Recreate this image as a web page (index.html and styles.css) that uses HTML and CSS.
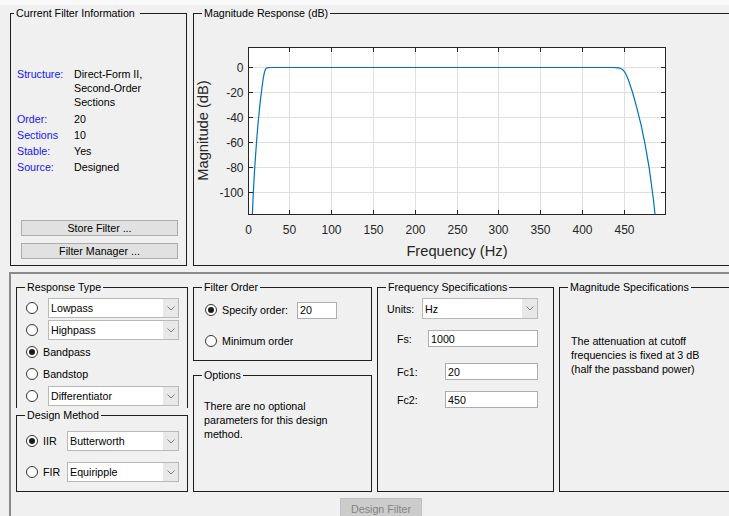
FILE: index.html
```html
<!DOCTYPE html>
<html lang="en">
<head>
<meta charset="utf-8">
<title>Filter Designer</title>
<link rel="stylesheet" href="styles.css">
</head>
<body>
<div class="strip"></div>

<div class="top-row">
  <fieldset class="panel info-panel">
    <legend class="legend-tight">Current Filter Information&nbsp;</legend>
    <div class="info-body">
      <dl class="info-grid">
        <dt>Structure:</dt><dd class="multi">Direct-Form II,<br>Second-Order<br>Sections</dd>
        <dt>Order:</dt><dd>20</dd>
        <dt>Sections</dt><dd>10</dd>
        <dt>Stable:</dt><dd>Yes</dd>
        <dt>Source:</dt><dd>Designed</dd>
      </dl>
      <div class="info-buttons">
        <button class="btn btn-wide" type="button">Store Filter ...</button>
        <button class="btn btn-wide" type="button">Filter Manager ...</button>
      </div>
    </div>
  </fieldset>

  <fieldset class="panel plot-panel">
    <legend>Magnitude Response (dB)</legend>
    <svg class="plot" width="535" height="245" viewBox="194 20 535 245" xmlns="http://www.w3.org/2000/svg">
      <rect class="axes-bg" x="248" y="47" width="418" height="167"/>
      <g class="grid-line">
        <path d="M289.5 47.5V214.5M331.5 47.5V214.5M373.5 47.5V214.5M415.5 47.5V214.5M457.5 47.5V214.5M498.5 47.5V214.5M540.5 47.5V214.5M582.5 47.5V214.5M624.5 47.5V214.5"/>
        <path d="M248.5 67.5H665.5M248.5 92.5H665.5M248.5 117.5H665.5M248.5 142.5H665.5M248.5 167.5H665.5M248.5 192.5H665.5"/>
      </g>
      <path class="curve" d="M252.4,214 L253.0,199.4 L253.85,182.6 L254.7,168.0 L256.4,143.7 L258.0,123.8 L258.9,115.0 L259.7,106.9 L260.5,99.3 L261.4,92.2 L262.2,85.7 L263.0,79.8 L263.9,74.8 L264.7,71.3 L265.6,69.2 L266.4,68.2 L268.1,67.6 L271.4,67.5 L611.7,67.5 L615.8,67.6 L620.0,68.2 L622.5,69.5 L624.2,71.3 L625.9,74.0 L628.4,79.9 L632.6,92.5 L636.7,107.3 L640.9,124.2 L645.1,144.3 L649.3,168.6 L653.5,200.0 L655.0,214"/>
      <g class="tick">
        <path d="M289.5 214V210M331.5 214V210M373.5 214V210M415.5 214V210M457.5 214V210M498.5 214V210M540.5 214V210M582.5 214V210M624.5 214V210"/>
        <path d="M289.5 48V52M331.5 48V52M373.5 48V52M415.5 48V52M457.5 48V52M498.5 48V52M540.5 48V52M582.5 48V52M624.5 48V52"/>
        <path d="M249 67.5H253M249 92.5H253M249 117.5H253M249 142.5H253M249 167.5H253M249 192.5H253"/>
        <path d="M665 67.5H661M665 92.5H661M665 117.5H661M665 142.5H661M665 167.5H661M665 192.5H661"/>
      </g>
      <rect class="axis-box" x="248.5" y="47.5" width="417" height="167"/>
      <g class="tick-label x-labels">
        <text x="248.5" y="234">0</text>
        <text x="289.5" y="234">50</text>
        <text x="331.5" y="234">100</text>
        <text x="373.5" y="234">150</text>
        <text x="415.5" y="234">200</text>
        <text x="457.5" y="234">250</text>
        <text x="498.5" y="234">300</text>
        <text x="540.5" y="234">350</text>
        <text x="582.5" y="234">400</text>
        <text x="624.5" y="234">450</text>
      </g>
      <g class="tick-label y-labels">
        <text x="243.5" y="72">0</text>
        <text x="243.5" y="97">-20</text>
        <text x="243.5" y="122">-40</text>
        <text x="243.5" y="147">-60</text>
        <text x="243.5" y="172">-80</text>
        <text x="243.5" y="197">-100</text>
      </g>
      <text class="axis-label" x="457" y="256">Frequency (Hz)</text>
      <text class="axis-label" transform="translate(208 130.5) rotate(-90)">Magnitude (dB)</text>
    </svg>
  </fieldset>
</div>

<div class="design-frame">
  <div class="columns">
    <div class="col col-type">
      <fieldset class="panel type-panel">
        <legend>Response Type</legend>
        <div class="type-body">
          <div class="opt-row">
            <span class="radio"></span>
            <div class="select select-indent"><span class="select-text">Lowpass</span><span class="select-arrow"><svg class="chev" width="8" height="5" viewBox="0 0 8 5"><path d="M0.5 0.5L4 4L7.5 0.5"/></svg></span></div>
          </div>
          <div class="opt-row">
            <span class="radio"></span>
            <div class="select select-indent"><span class="select-text">Highpass</span><span class="select-arrow"><svg class="chev" width="8" height="5" viewBox="0 0 8 5"><path d="M0.5 0.5L4 4L7.5 0.5"/></svg></span></div>
          </div>
          <div class="opt-row">
            <span class="radio is-on"></span>
            <span class="opt-label">Bandpass</span>
          </div>
          <div class="opt-row">
            <span class="radio"></span>
            <span class="opt-label">Bandstop</span>
          </div>
          <div class="opt-row">
            <span class="radio"></span>
            <div class="select select-indent"><span class="select-text">Differentiator</span><span class="select-arrow"><svg class="chev" width="8" height="5" viewBox="0 0 8 5"><path d="M0.5 0.5L4 4L7.5 0.5"/></svg></span></div>
          </div>
        </div>
      </fieldset>
      <fieldset class="panel method-panel">
        <legend>Design Method</legend>
        <div class="method-body">
          <div class="opt-row">
            <span class="radio is-on"></span>
            <span class="opt-label method-label">IIR</span>
            <div class="select"><span class="select-text">Butterworth</span><span class="select-arrow"><svg class="chev" width="8" height="5" viewBox="0 0 8 5"><path d="M0.5 0.5L4 4L7.5 0.5"/></svg></span></div>
          </div>
          <div class="opt-row">
            <span class="radio"></span>
            <span class="opt-label method-label">FIR</span>
            <div class="select"><span class="select-text">Equiripple</span><span class="select-arrow"><svg class="chev" width="8" height="5" viewBox="0 0 8 5"><path d="M0.5 0.5L4 4L7.5 0.5"/></svg></span></div>
          </div>
        </div>
      </fieldset>
    </div>

    <div class="col col-order">
      <fieldset class="panel order-panel">
        <legend>Filter Order</legend>
        <div class="order-body">
          <div class="order-row">
            <span class="radio is-on"></span>
            <span class="opt-label">Specify order:</span>
            <input class="field order-field" type="text" value="20">
          </div>
          <div class="order-row">
            <span class="radio"></span>
            <span class="opt-label">Minimum order</span>
          </div>
        </div>
      </fieldset>
      <fieldset class="panel options-panel">
        <legend>Options</legend>
        <p class="note options-note">There are no optional parameters for this design method.</p>
      </fieldset>
    </div>

    <fieldset class="panel freq-panel">
      <legend>Frequency Specifications</legend>
      <div class="freq-body">
        <div class="freq-row units-row">
          <span class="freq-label units-label">Units:</span>
          <div class="select select-tall"><span class="select-text">Hz</span><span class="select-arrow"><svg class="chev" width="8" height="5" viewBox="0 0 8 5"><path d="M0.5 0.5L4 4L7.5 0.5"/></svg></span></div>
        </div>
        <div class="freq-row fs-row">
          <span class="freq-label fs-label">Fs:</span>
          <input class="field" type="text" value="1000">
        </div>
        <div class="freq-row fc-row fc1-row">
          <span class="freq-label fc-label">Fc1:</span>
          <input class="field" type="text" value="20">
        </div>
        <div class="freq-row fc-row fc2-row">
          <span class="freq-label fc-label">Fc2:</span>
          <input class="field" type="text" value="450">
        </div>
      </div>
    </fieldset>

    <fieldset class="panel mag-panel">
      <legend>Magnitude Specifications</legend>
      <p class="note mag-note">The attenuation at cutoff frequencies is fixed at 3 dB (half the passband power)</p>
    </fieldset>
  </div>

  <div class="action-row">
    <button class="btn btn-design" type="button" disabled>Design Filter</button>
  </div>
</div>
</body>
</html>
```

FILE: styles.css
```css
* {
  box-sizing: border-box;
}

html,
body {
  margin: 0;
  overflow: hidden;
}

body {
  width: 729px;
  height: 516px;
  background: #f0f0f0;
  color: #000;
  font-family: "Liberation Sans", Arial, sans-serif;
  font-size: 10.7px;
  line-height: 14px;
}

/* thin light band left by the toolbar above */
.strip {
  height: 5px;
  background: #f9f9f9;
}

/* ---------- group boxes ---------- */
.panel {
  margin: 0;
  padding: 0;
  min-width: 0;
  border: 1px solid #1e1e1e;
}

.panel > legend {
  margin-left: 8px;
  padding: 0 2px;
  line-height: 14px;
}

.panel > .legend-tight {
  margin-left: 3px;
}

/* ---------- top row: info + response plot ---------- */
.top-row {
  display: flex;
  gap: 6px;
  padding: 1px 0 0 10px;
}

.info-panel {
  flex: 0 0 177px;
  height: 260px;
}

.info-body {
  height: 245px;
  display: flex;
  flex-direction: column;
  padding: 47px 8px 6px 6px;
}

.info-grid {
  margin: 0;
  display: grid;
  grid-template-columns: 57px 1fr;
  row-gap: 2px;
}

.info-grid dt {
  color: #1515ff;
}

.info-grid dd {
  margin: 0;
}

.info-grid .multi {
  margin-bottom: 1px;
}

.info-buttons {
  margin-top: auto;
  padding-left: 4px;
  display: flex;
  flex-direction: column;
  gap: 7px;
}

.btn {
  font: inherit;
  line-height: 14px;
  color: #000;
  background: #e1e1e1;
  border: 1px solid #adadad;
  padding: 0;
  margin: 0;
  text-align: center;
}

.btn-wide {
  width: 157px;
  height: 16px;
}

.plot-panel {
  flex: 0 0 540px;
  height: 260px;
}

.plot {
  display: block;
}

.axes-bg {
  fill: #fff;
}

.grid-line path {
  fill: none;
  stroke: #dfdfdf;
  stroke-width: 1;
}

.curve {
  fill: none;
  stroke: #0072bd;
  stroke-width: 1.2;
  stroke-linejoin: round;
}

.tick path {
  fill: none;
  stroke: #262626;
  stroke-width: 1;
}

.axis-box {
  fill: none;
  stroke: #262626;
  stroke-width: 1;
}

.tick-label text {
  font-family: "Liberation Sans", Arial, sans-serif;
  font-size: 12px;
  fill: #262626;
}

.x-labels text {
  text-anchor: middle;
}

.y-labels text {
  text-anchor: end;
}

.axis-label {
  font-family: "Liberation Sans", Arial, sans-serif;
  font-size: 14.7px;
  fill: #262626;
  text-anchor: middle;
}

/* ---------- lower design area ---------- */
.design-frame {
  margin: 6px 0 0 9px;
  height: 244px;
  border-top: 2px solid #8a8a8a;
  border-left: 2px solid #8a8a8a;
  padding: 6px 0 0 5px;
}

.columns {
  display: flex;
  gap: 5px;
  height: 212px;
}

.col {
  display: flex;
  flex-direction: column;
}

.col-type {
  flex: 0 0 172px;
}

.col-order {
  flex: 0 0 179px;
  gap: 7px;
}

.type-panel {
  border-bottom: none;
}

.type-body {
  display: flex;
  flex-direction: column;
  gap: 2px;
  padding: 4px 8px 2px 9px;
}

.method-panel {
  flex: 1;
}

.method-body {
  display: flex;
  flex-direction: column;
  gap: 11px;
  padding: 9px 8px 0 9px;
}

.opt-row {
  display: flex;
  align-items: center;
  height: 20px;
}

.opt-label {
  margin-left: 5px;
  white-space: nowrap;
}

.method-label {
  width: 24px;
  flex: none;
}

/* radio buttons */
.radio {
  flex: none;
  position: relative;
  width: 12px;
  height: 12px;
  border: 1px solid #333;
  border-radius: 50%;
  background: #fff;
}

.radio.is-on::after {
  content: "";
  position: absolute;
  inset: 2px;
  border-radius: 50%;
  background: #1a1a1a;
}

/* drop-down boxes */
.select {
  flex: 1;
  display: flex;
  align-items: stretch;
  height: 20px;
  background: #fff;
  border: 1px solid #b9b9b9;
}

.select-indent {
  margin-left: 10px;
}

.select-tall {
  height: 21px;
}

.select-text {
  flex: 1;
  padding-left: 2px;
  display: flex;
  align-items: center;
  white-space: nowrap;
}

.select-arrow {
  flex: 0 0 15px;
  display: flex;
  align-items: center;
  justify-content: center;
  background: #e8e8e8;
}

.chev {
  display: block;
}

.chev path {
  fill: none;
  stroke: #7c7c7c;
  stroke-width: 1;
}

/* filter order */
.order-panel {
  height: 81px;
  flex: none;
}

.order-body {
  display: flex;
  flex-direction: column;
  gap: 13px;
  padding: 7px 8px 0 11px;
}

.order-row {
  display: flex;
  align-items: center;
  height: 18px;
}

.field {
  font: inherit;
  color: #000;
  height: 17px;
  margin: 0;
  padding: 0 2px;
  border: 1px solid #abadb3;
  background: #fff;
  min-width: 0;
}

.order-field {
  width: 40px;
  margin-left: 9px;
}

.options-panel {
  flex: 1;
}

.note {
  margin: 0;
  max-width: 150px;
}

.options-note {
  padding: 17px 0 0 10px;
}

/* frequency specifications */
.freq-panel {
  flex: 0 0 177px;
}

.freq-body {
  padding: 4px 15px 0 9px;
}

.freq-row {
  display: flex;
  align-items: center;
}

.freq-row .field {
  flex: 1;
}

.freq-label {
  flex: none;
}

.units-label {
  width: 35px;
}

.fs-row,
.fc-row {
  height: 17px;
  padding-left: 10px;
}

.fs-row {
  margin-top: 11px;
}

.fs-label {
  width: 31px;
}

.fc1-row {
  margin-top: 16px;
}

.fc2-row {
  margin-top: 11px;
}

.fc-label {
  width: 48px;
}

/* magnitude specifications */
.mag-panel {
  flex: 0 0 200px;
}

.mag-note {
  padding: 40px 0 0 11px;
}

/* action button */
.action-row {
  padding: 6px 0 0 324px;
}

.btn-design {
  width: 82px;
  height: 22px;
  background: #cccccc;
  border-color: #bfbfbf;
  color: #838383;
}
```
